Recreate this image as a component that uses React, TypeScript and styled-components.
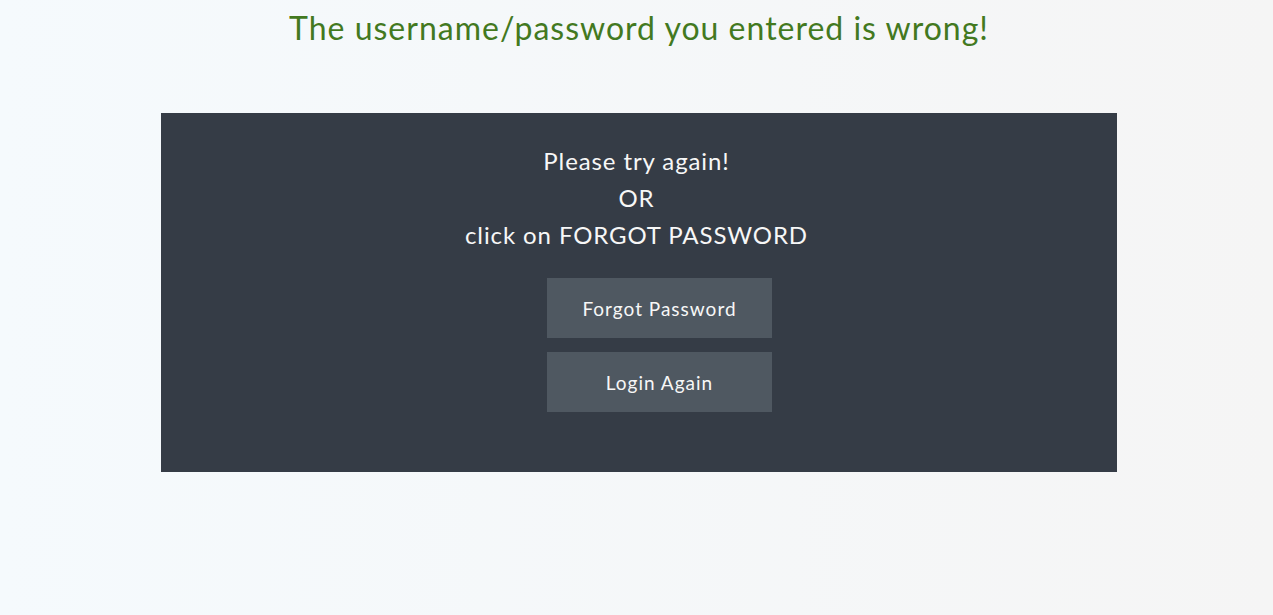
import React from "react";
import styled, { createGlobalStyle } from "styled-components";

const Global = createGlobalStyle`
  html, body { margin: 0; padding: 0; }
  body {
    font-family: Lato, "Open Sans", sans-serif;
    background: linear-gradient(90deg, #f5fafd 0%, #f5f5f5 100%);
    min-height: 615px;
  }
`;

const Page = styled.div`
  height: 615px;
  display: flex;
  flex-direction: column;
  align-items: center;
`;

const Title = styled.h1`
  margin: 8px 0 0 5px;
  font-size: 32px;
  font-weight: 400;
  line-height: 40px;
  letter-spacing: 1px;
  color: #43791f;
  text-align: center;
`;

const Card = styled.div`
  margin-top: 65px;
  margin-left: 5px;
  width: 956px;
  height: 359px;
  box-sizing: border-box;
  background: #353c46;
  display: flex;
  flex-direction: column;
  align-items: center;
  padding-top: 29px;
`;

const Message = styled.p`
  margin: 0;
  box-sizing: border-box;
  width: 100%;
  padding-right: 5px;
  font-size: 24px;
  line-height: 37px;
  letter-spacing: 0.9px;
  color: #f7f7f7;
  text-align: center;
`;

const Buttons = styled.div`
  display: flex;
  flex-direction: column;
  gap: 14px;
  margin-top: 25px;
  margin-left: 41px;
`;

const Button = styled.button`
  width: 225px;
  height: 60px;
  padding: 0;
  border: none;
  background: #4f5861;
  color: #f7f7f7;
  font-family: inherit;
  font-size: 19px;
  letter-spacing: 1px;
  cursor: pointer;
`;

export default function App() {
  return (
    <>
      <Global />
      <Page>
        <Title>The username/password you entered is wrong!</Title>
        <Card>
          <Message>
            Please try again!
            <br />
            OR
            <br />
            click on FORGOT PASSWORD
          </Message>
          <Buttons>
            <Button>Forgot Password</Button>
            <Button>Login Again</Button>
          </Buttons>
        </Card>
      </Page>
    </>
  );
}
